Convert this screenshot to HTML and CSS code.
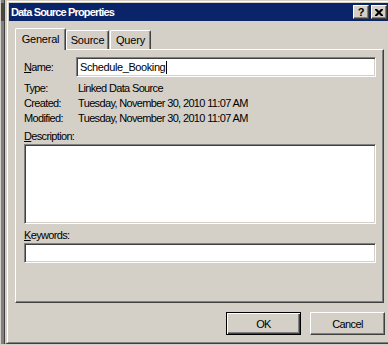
FILE: index.html
```html
<!DOCTYPE html>
<html lang="en">
<head>
    <meta charset="UTF-8">
    <title>Data Source Properties</title>
    <link rel="stylesheet" href="styles.css">
</head>
<body>
    <div class="screen">
        <div class="behind"></div>
        <div class="window">
            <div class="frame">
                <!-- Caption -->
                <div class="titlebar">
                    <span class="title">Data Source Properties</span>
                    <div class="caption-buttons">
                        <span class="cap-btn help">?</span>
                        <span class="cap-btn close">
                            <svg width="8" height="7" viewBox="0 0 8 7"><path d="M0 0h2l2 2 2-2h2v1L5.5 3.5 8 6v1H6L4 5 2 7H0V6l2.5-2.5L0 1z" fill="#000"/></svg>
                        </span>
                    </div>
                </div>

                <div class="content">
                    <!-- Tabs -->
                    <div class="tabs">
                        <span class="tab selected">General</span>
                        <span class="tab source">Source</span>
                        <span class="tab query">Query</span>
                    </div>

                    <div class="panel">
                        <div class="row name-row">
                            <span class="label"><u>N</u>ame:</span>
                            <div class="textbox"><span class="text">Schedule_Booking</span><span class="caret"></span></div>
                        </div>
                        <div class="info">
                            <span class="label">Type:</span>
                            <span class="value">Linked Data Source</span>
                            <span class="label">Created:</span>
                            <span class="value">Tuesday, November 30, 2010 11:07 AM</span>
                            <span class="label">Modified:</span>
                            <span class="value">Tuesday, November 30, 2010 11:07 AM</span>
                        </div>
                        <div class="field-label desc-label"><u>D</u>escription:</div>
                        <div class="textbox area"></div>
                        <div class="field-label kw-label"><u>K</u>eywords:</div>
                        <div class="textbox"></div>
                    </div>

                    <div class="buttons">
                        <span class="btn default">OK</span>
                        <span class="btn">Cancel</span>
                    </div>
                </div>
            </div>
        </div>
    </div>
</body>
</html>
```

FILE: styles.css
```css
* {
    margin: 0;
    padding: 0;
    box-sizing: border-box;
}

body {
    width: 388px;
    height: 345px;
    overflow: hidden;
    background-color: #d4d0c8;
    font-family: "Liberation Sans", Arial, sans-serif;
    font-size: 11px;
    letter-spacing: -0.65px;
    color: #000;
}

.screen {
    display: flex;
    height: 344px;
}

/* Edge of the window behind */
.behind {
    width: 5px;
    border-left: 1px solid #d4d0c8;
    border-right: 1px solid #404040;
    background: linear-gradient(#808080 0 3px, #4a4838 3px 21px, #808080 21px);
}

.window {
    flex: 1;
    display: flex;
    border-left: 2px solid #d4d0c8;
    border-top: 1px solid #d4d0c8;
    border-bottom: 1px solid #404040;
}

.frame {
    flex: 1;
    display: flex;
    flex-direction: column;
    border-left: 1px solid #fff;
    border-top: 1px solid #fff;
    border-bottom: 1px solid #808080;
    padding: 1px 0 0 1px;
}

/* Caption */
.titlebar {
    height: 18px;
    background-color: #0a246a;
    color: #fff;
    display: flex;
    align-items: center;
    justify-content: space-between;
    padding: 0 1px 0 2px;
}

.title {
    font-weight: bold;
    font-size: 11px;
    letter-spacing: -0.85px;
}

.caption-buttons {
    display: flex;
    gap: 2px;
}

.cap-btn {
    width: 16px;
    height: 14px;
    background-color: #d4d0c8;
    border: 1px solid;
    border-color: #fff #404040 #404040 #fff;
    box-shadow: inset -1px -1px #808080;
    display: flex;
    align-items: center;
    justify-content: center;
    color: #000;
    font-weight: bold;
    font-size: 11px;
    letter-spacing: 0;
    line-height: 1;
}

.content {
    flex: 1;
    display: flex;
    flex-direction: column;
    padding-top: 7px;
}

/* Tabs */
.tabs {
    display: flex;
    align-items: flex-end;
    height: 21px;
    padding-left: 6px;
}

.tab {
    height: 19px;
    display: flex;
    align-items: center;
    justify-content: center;
    border-left: 1px solid #fff;
    border-top: 1px solid #fff;
    border-right: 1px solid #404040;
    box-shadow: inset -1px 0 #808080;
    border-top-left-radius: 2px;
    border-top-right-radius: 2px;
    background-color: #d4d0c8;
    letter-spacing: -0.2px;
}

.tab.selected {
    width: 51px;
    height: 22px;
    margin-bottom: -1px;
    position: relative;
    z-index: 1;
    padding-bottom: 2px;
}

.tab.source {
    width: 43px;
}

.tab.query {
    width: 41px;
    margin-left: 1px;
}

.panel {
    height: 254px;
    margin: 0 4px 0 6px;
    border-left: 1px solid #fff;
    border-top: 1px solid #fff;
    border-right: 1px solid #404040;
    border-bottom: 1px solid #404040;
    box-shadow: inset -1px -1px #808080;
    padding: 7px 7px 0 8px;
    display: flex;
    flex-direction: column;
}

.row {
    display: flex;
    align-items: center;
}

.name-row .label {
    width: 52px;
}

.textbox {
    flex: none;
    height: 20px;
    background-color: #fff;
    border: 1px solid;
    border-color: #808080 #fff #fff #808080;
    box-shadow: inset 1px 1px #404040, inset -1px -1px #d4d0c8;
    display: flex;
    align-items: center;
    padding-left: 3px;
    letter-spacing: -0.4px;
}

.row .textbox {
    flex: 1;
}

.caret {
    width: 1px;
    height: 13px;
    background-color: #000;
    margin-left: 1px;
}

.info {
    display: grid;
    grid-template-columns: 52px 1fr;
    grid-auto-rows: 15px;
    align-items: center;
    margin-top: 3px;
}

.value {
    padding-left: 2px;
}

.field-label {
    height: 15px;
    display: flex;
    align-items: center;
}

.desc-label {
    margin-top: 3px;
    margin-bottom: 1px;
}

.textbox.area {
    height: 80px;
}

.kw-label {
    margin-top: 3px;
    margin-bottom: 1px;
}

/* Dialog buttons */
.buttons {
    display: flex;
    justify-content: flex-end;
    gap: 9px;
    margin: 9px 3px 0 0;
}

.btn {
    width: 75px;
    height: 23px;
    display: flex;
    align-items: center;
    justify-content: center;
    background-color: #d4d0c8;
    border: 1px solid;
    border-color: #fff #404040 #404040 #fff;
    box-shadow: inset -1px -1px #808080;
}

.btn.default {
    border-color: #000;
    box-shadow: inset 1px 1px #fff, inset -1px -1px #404040, inset -2px -2px #808080;
}
```
